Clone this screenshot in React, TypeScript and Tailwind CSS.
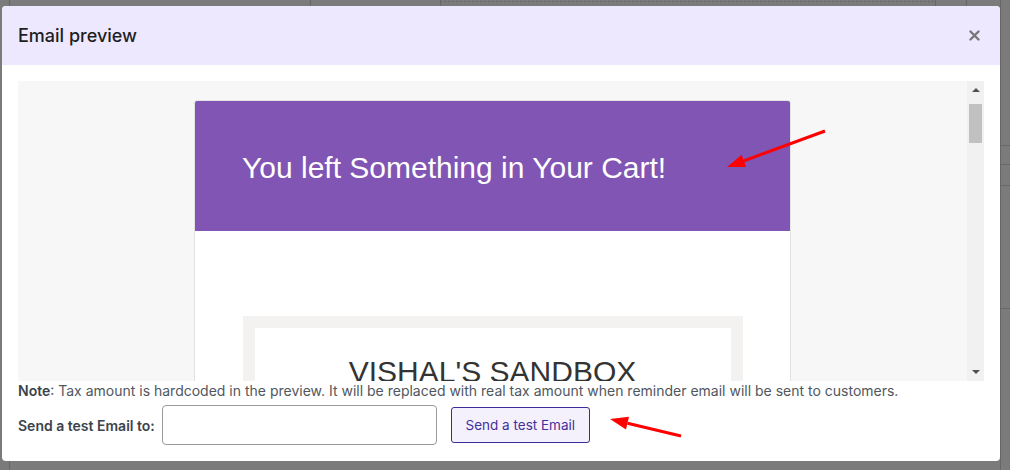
function Arrow({
  x1,
  y1,
  x2,
  y2,
}: {
  x1: number;
  y1: number;
  x2: number;
  y2: number;
}) {
  const dx = x2 - x1;
  const dy = y2 - y1;
  const len = Math.hypot(dx, dy);
  const ux = dx / len;
  const uy = dy / len;
  const bx = x2 - ux * 18;
  const by = y2 - uy * 18;
  const nx = -uy * 6.5;
  const ny = ux * 6.5;
  return (
    <g>
      <line x1={x1} y1={y1} x2={bx} y2={by} stroke="#ff0000" strokeWidth={3} />
      <polygon
        points={`${x2},${y2} ${bx + nx},${by + ny} ${bx - nx},${by - ny}`}
        fill="#ff0000"
      />
    </g>
  );
}

// faint page behind the overlay
function Backdrop() {
  return (
    <svg className="pointer-events-none absolute left-0 top-0" width="1010" height="470">
      <g stroke="#676767" strokeWidth="1">
        <line x1="9.5" y1="0" x2="9.5" y2="6" />
        <line x1="9.5" y1="461" x2="9.5" y2="470" />
        <line x1="310.5" y1="0" x2="310.5" y2="6" />
        <line x1="440.5" y1="0" x2="440.5" y2="6" />
        <line x1="440" y1="1.5" x2="935" y2="1.5" strokeDasharray="2 2" />
        <line x1="935.5" y1="0" x2="935.5" y2="6" />
        <line x1="966.5" y1="0" x2="966.5" y2="6" />
        <line x1="1000.5" y1="0" x2="1000.5" y2="470" />
        <line x1="1000" y1="145.5" x2="1010" y2="145.5" />
        <line x1="1000" y1="164.5" x2="1010" y2="164.5" />
        <line x1="1000" y1="185.5" x2="1010" y2="185.5" />
        <line x1="1000" y1="308.5" x2="1010" y2="308.5" />
      </g>
    </svg>
  );
}

function EmailFrame() {
  return (
    <div className="flex h-[300px] bg-[#f7f7f7]">
      <div className="flex flex-1 justify-center overflow-hidden pt-[19px]">
        <div className="h-[400px] w-[597px] shrink-0 rounded-t-[3px] border-x border-t border-[#e3e3e3] bg-white">
          <div className="h-[130px] rounded-t-[2px] bg-[#8155b3] pl-[47px] pt-[52px]">
            <h1 className="text-[30px] leading-[30px] text-white [font-family:'Liberation_Sans',Arial,sans-serif]">
              You left Something in Your Cart!
            </h1>
          </div>
          <div className="mx-auto mt-[85px] w-[500px] border-[12px] border-[#f3f2f0] bg-white pt-[27px] pb-10 text-center">
            <p className="text-[30px] leading-[34px] text-[#333333] [font-family:'Liberation_Sans',Arial,sans-serif]">
              VISHAL'S SANDBOX
            </p>
          </div>
        </div>
      </div>
      <div className="flex w-[17px] flex-col items-center bg-[#f1f1f1]">
        <div className="mt-[7px] h-0 w-0 border-x-[4px] border-b-[4px] border-x-transparent border-b-[#505050]" />
        <div className="mt-[12px] h-[39px] w-[13px] bg-[#c1c1c1]" />
        <div className="flex-1" />
        <div className="mb-[7px] h-0 w-0 border-x-[4px] border-t-[4px] border-x-transparent border-t-[#505050]" />
      </div>
    </div>
  );
}

export default function App() {
  return (
    <div className="relative h-[470px] w-[1010px] overflow-hidden bg-[#7b7b7b] pl-[2px] pt-[6px] [font-family:Inter,'Noto_Sans',sans-serif]">
      <Backdrop />
      <div className="relative h-[455px] w-[998px] overflow-hidden rounded-[4px] bg-white">
        <div className="flex h-[59px] items-center justify-between bg-[#ede8fe] pl-[16px] pr-[20px]">
          <h2 className="text-[18px] font-medium text-[#1e1e1e]">Email preview</h2>
          <svg width="11" height="11" viewBox="0 0 11 11">
            <path
              d="M1.5 1.5 L9.5 9.5 M9.5 1.5 L1.5 9.5"
              stroke="#777777"
              strokeWidth="2.4"
              strokeLinecap="round"
            />
          </svg>
        </div>
        <div className="px-[16px] pt-[16px]">
          <EmailFrame />
          <p className="text-[14px] leading-[20px] text-[#50575e]">
            <b className="font-semibold text-[#3c434a]">Note</b>: Tax amount is
            hardcoded in the preview. It will be replaced with real tax amount
            when reminder email will be sent to customers.
          </p>
          <div className="mt-[4px] flex h-[40px] items-center gap-[7px]">
            <label className="text-[14px] font-semibold text-[#3c434a]">
              Send a test Email to:
            </label>
            <input
              type="email"
              className="h-[40px] w-[275px] rounded-[4px] border border-[#9a9a9a] bg-white px-2 text-[14px]"
            />
            <button className="ml-[7px] h-[36px] w-[139px] rounded-[3px] border border-[#3e2a96] bg-[#f4f1fd] text-[13.5px] text-[#452f9c]">
              Send a test Email
            </button>
          </div>
        </div>
      </div>
      <svg
        className="pointer-events-none absolute left-0 top-0"
        width="1010"
        height="470"
      >
        <Arrow x1={825} y1={131} x2={727} y2={167} />
        <Arrow x1={681} y1={436} x2={610} y2={419} />
      </svg>
    </div>
  );
}
